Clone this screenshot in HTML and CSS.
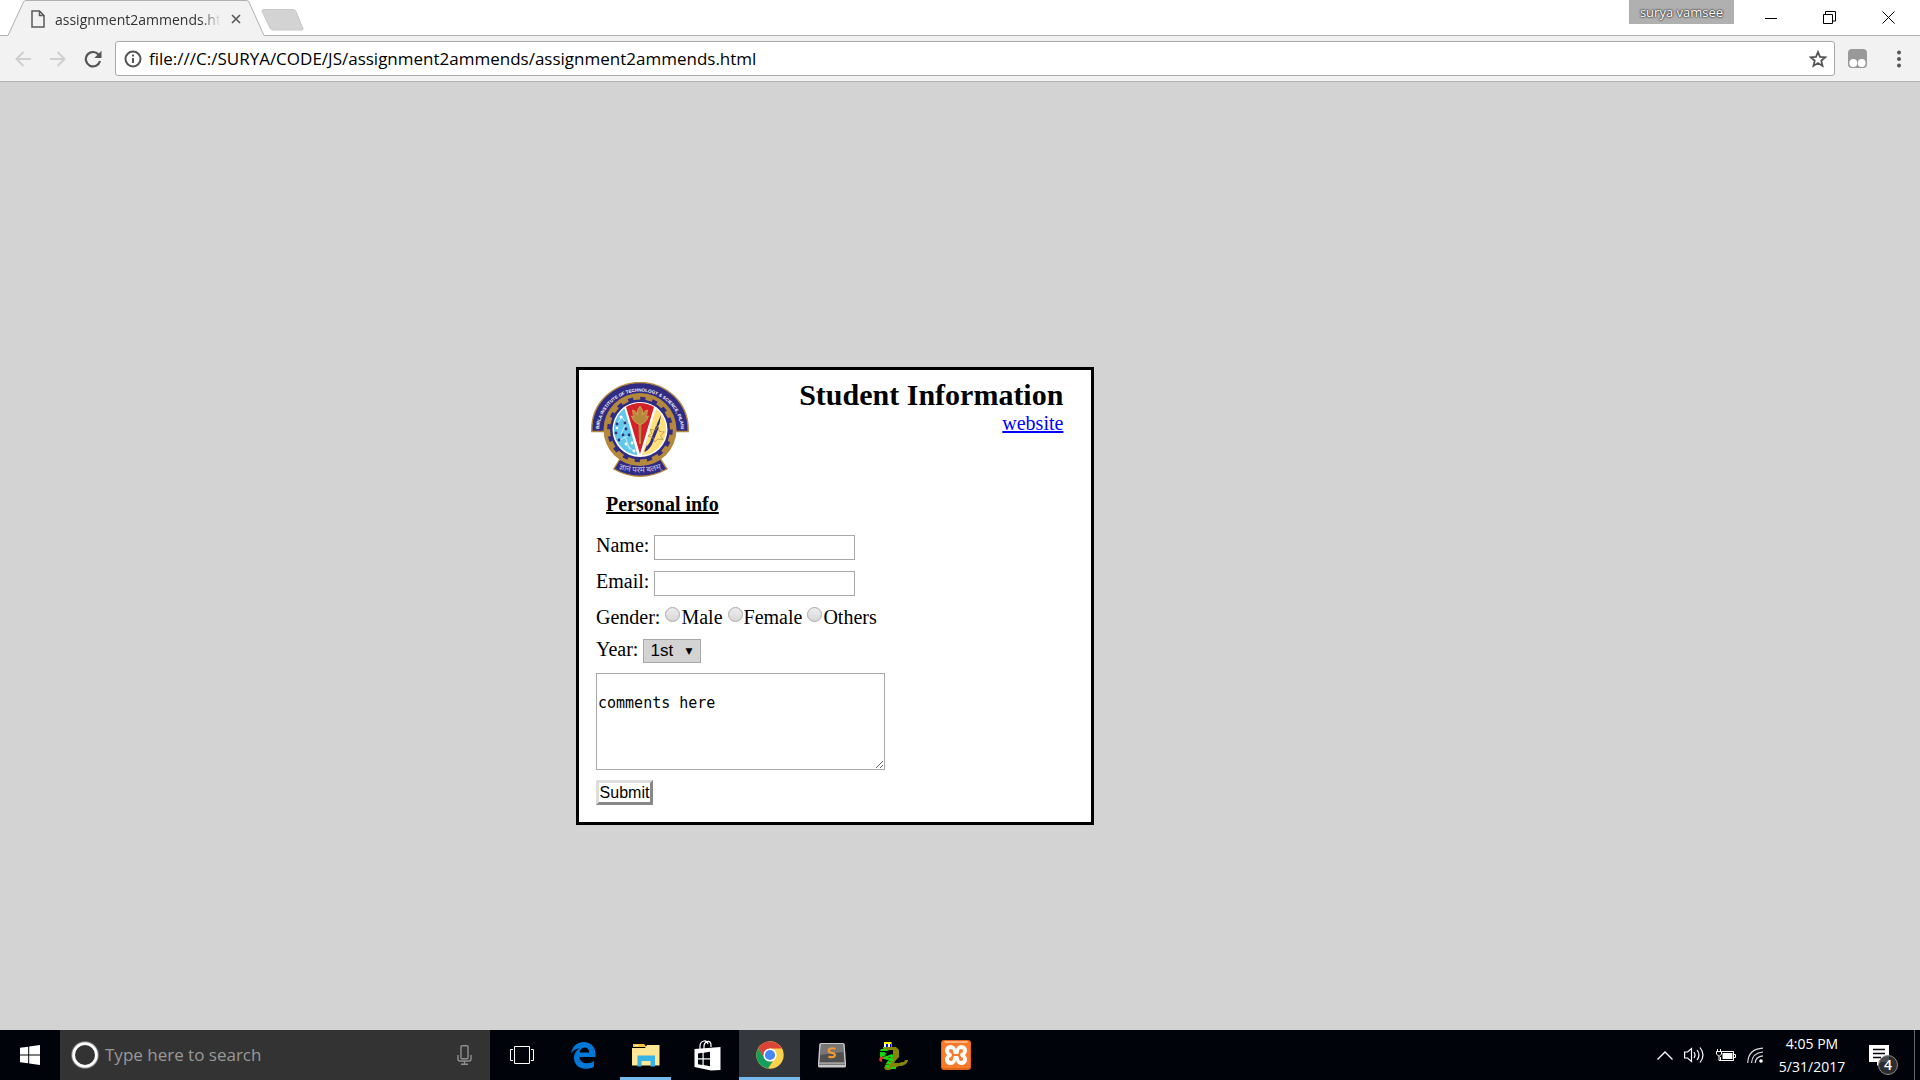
FILE: index.html
```html
<!DOCTYPE html>
<html lang="en">
<head>
<meta charset="utf-8">
<title>assignment2ammends.html</title>
<link rel="stylesheet" href="styles.css">
</head>
<body>
<header class="tabstrip">
  <div class="tab">
    <svg class="tab-shape" viewBox="0 0 260 36" preserveAspectRatio="none" aria-hidden="true"><path d="M0 35.500H2L17.500 2Q18.500.5 20 .5H240Q242 .5 243 2L258 35.500H260V36H0z" fill="#f2f2f2"/><path d="M0 35.500H2L17.500 2Q18.500.5 20 .5H240Q242 .5 243 2L258 35.500H260" fill="none" stroke="#b0b0b0"/></svg>
    <svg class="tab-page" width="14" height="18" viewBox="0 0 14 18" fill="none" stroke="#5a5a5a" stroke-width="1.500"><path d="M1 1h7.500L13 5.500V17H1zM8.500 1v4.500H13"/></svg>
    <span class="tab-title">assignment2ammends.html</span>
    <button class="tab-close" aria-label="Close tab"><svg width="10" height="10" viewBox="0 0 10 10" stroke="#5a5a5a" stroke-width="1.700"><path d="M1 1l8 8M9 1L1 9"/></svg></button>
  </div>
  <button class="new-tab" aria-label="New tab"><svg width="43" height="22" viewBox="0 0 43 22"><path d="M3 .5h29q2 0 3 2l7 17q.5 1.500-1 1.500H12q-2 0-3-2L1 2Q.7.5 3 .5z" fill="#d3d3d3" stroke="#c8c8c8"/></svg></button>
  <button class="profile">surya vamsee</button>
  <div class="window-controls">
    <button aria-label="Minimize"><svg width="12" height="12" viewBox="0 0 12 12" stroke="#000"><path d="M0 7.500h12"/></svg></button>
    <button aria-label="Restore"><svg width="13" height="13" viewBox="0 0 13 13" fill="none" stroke="#000"><path d="M.5 3.500h9v9h-9zM2.500 3V.5h10V10H9.500"/></svg></button>
    <button aria-label="Close"><svg width="13" height="13" viewBox="0 0 13 13" stroke="#000"><path d="M.5.5l12 12M12.500.5l-12 12"/></svg></button>
  </div>
</header>
<nav class="toolbar">
  <button class="nav-button" aria-label="Back"><svg width="16" height="16" viewBox="0 0 16 16" fill="none" stroke="#cfcfcf" stroke-width="2"><path d="M16 8H1.500M8.500 1L1.500 8l7 7"/></svg></button>
  <button class="nav-button" aria-label="Forward"><svg width="16" height="16" viewBox="0 0 16 16" fill="none" stroke="#cfcfcf" stroke-width="2"><path d="M0 8h14.500M7.500 1l7 7-7 7"/></svg></button>
  <button class="nav-button" aria-label="Reload"><svg width="18" height="18" viewBox="0 0 18 18"><path d="M14.500 4.500A7.200 7.200 0 1 0 16 11" fill="none" stroke="#555" stroke-width="2.200"/><path d="M17.500.8V8H10.300z" fill="#555"/></svg></button>
  <div class="omnibox">
    <svg width="18" height="18" viewBox="0 0 18 18" fill="none" stroke="#555" stroke-width="2"><circle cx="9" cy="9" r="7.500"/><path d="M9 8v5M9 4.500v2"/></svg>
    <input class="address" type="text" aria-label="Address" value="file:///C:/SURYA/CODE/JS/assignment2ammends/assignment2ammends.html">
    <button class="star" aria-label="Bookmark"><svg width="18" height="18" viewBox="0 0 18 18"><path d="M9 2l2 4.900 5.300.4-4 3.400 1.200 5.200L9 13.100l-4.500 2.800 1.200-5.200-4-3.400L7 6.900z" fill="none" stroke="#555" stroke-width="1.800"/></svg></button>
  </div>
  <button class="extension" aria-label="Extension"><svg width="19" height="19" viewBox="0 0 19 19"><rect width="19" height="19" rx="4" fill="#999"/><circle cx="5.300" cy="14" r="3.900" fill="#fff"/><circle cx="13.700" cy="14" r="3.900" fill="#fff"/></svg></button>
  <button class="menu" aria-label="Menu"><svg width="4" height="18" viewBox="0 0 4 18" fill="#555"><circle cx="2" cy="2.500" r="2"/><circle cx="2" cy="9" r="2"/><circle cx="2" cy="15.500" r="2"/></svg></button>
</nav>
<main class="page">
  <section class="card">
    <div class="card-head">
      <svg class="crest" width="98" height="95" viewBox="0 0 196 190" role="img" aria-label="Birla Institute of Technology and Science, Pilani">
        <defs><path id="arc-top" d="M16 99A82 80 0 0 1 180 99"/><path id="arc-bottom" d="M50 172Q98 190 146 172"/></defs>
        <g transform="scale(2)">
          <path d="M.8 49.500V47a48.200 46.500 0 0 1 96.400 0v2.500z" fill="#302b83" stroke="#b5893c" stroke-width="1.400"/>
          <path d="M29 77L22.800 87Q49 101.500 76 87L69.500 77z" fill="#302b83" stroke="#b5893c" stroke-width="1.400"/>
          <circle cx="49" cy="47.500" r="36.500" fill="#b5893c"/>
          <circle cx="49" cy="47.500" r="31" fill="none" stroke="#302b83" stroke-width="3.600" stroke-dasharray="5.200 6.974"/>
          <circle cx="49" cy="47.500" r="30" fill="#302b83"/>
          <circle cx="49" cy="47.500" r="27.500" fill="#fff"/>
          <path d="M33.500 26.500A26 26 0 0 0 46.500 73.300z" fill="#62c8ea"/>
          <path d="M35 25Q49 17 63 25L49 72z" fill="#d22129"/>
          <path d="M65 26.800A26 26 0 0 1 51 73.300z" fill="#ffe07a"/>
          <g stroke="#d9f2fb" stroke-width=".8" fill="none"><path d="M26 42l5-7 4 6-5 11 5 5 4 11M29 58l10-5M34 62l9 7"/></g>
          <g fill="#302b83"><circle cx="26" cy="42" r="1.400"/><circle cx="34" cy="41" r="1.400"/><circle cx="35" cy="47" r="1.400"/><circle cx="25" cy="51" r="1.400"/><circle cx="32" cy="53" r="1.400"/><circle cx="28" cy="58" r="1.400"/><circle cx="38" cy="53" r="1.400"/></g>
          <g fill="#fff"><circle cx="30" cy="35" r="1.600"/><circle cx="26" cy="46" r="1.300"/><circle cx="41" cy="61" r="1.400"/><circle cx="43" cy="69" r="1.400"/><circle cx="35" cy="62" r="1.400"/></g>
          <path d="M47.500 40h3l-.5 22h-2z" fill="#b5893c"/>
          <path d="M49 24q4 5 2.500 9 2-5 5-5 0 4-2 7 2-1 3-1-2 7-8.500 8.500Q42.500 41 40.500 34q1 0 3 1-2-3-2-7 3 0 5 5-1.500-4 2.500-9z" fill="#b5893c" stroke="#d8ae58" stroke-width=".7"/>
          <path d="M70 33l-1.500 9-2 3-1-2zM65 44l3 1-6 15q-2 6-8 10l1-4 4-6zM57 66l-4 4 3-7z" fill="#302b83"/>
          <path d="M59 47l5 1.500 3-4 1.500 5 5 .5-4 3.500 2.500 4-5-.5-3.500 3-1.500-4.500-5-1.500 4-2.500z" fill="none" stroke="#a58a45" stroke-width=".7"/>
        </g>
        <text class="crest-title"><textPath href="#arc-top" startOffset="50%" text-anchor="middle">BIRLA INSTITUTE OF TECHNOLOGY &amp; SCIENCE, PILANI</textPath></text>
        <text class="crest-motto"><textPath href="#arc-bottom" startOffset="50%" text-anchor="middle">ज्ञानं परमं बलम्</textPath></text>
      </svg>
      <div class="heading">
        <h1>Student Information</h1>
        <a href="#website">website</a>
      </div>
    </div>
    <h2>Personal info</h2>
    <form class="form">
      <div class="row row-text"><label for="name">Name:</label><input class="field" id="name" type="text"></div>
      <div class="row row-text"><label for="email">Email:</label><input class="field" id="email" type="text"></div>
      <div class="row row-radio"><span>Gender:</span>
        <label class="option"><input type="radio" name="gender">Male</label>
        <label class="option"><input type="radio" name="gender">Female</label>
        <label class="option"><input type="radio" name="gender">Others</label>
      </div>
      <div class="row"><label for="year">Year:</label>
        <span class="select-box"><select id="year"><option>1st</option><option>2nd</option><option>3rd</option><option>4th</option></select></span>
      </div>
      <textarea class="comments" aria-label="Comments">

comments here</textarea>
      <button class="submit" type="button">Submit</button>
    </form>
  </section>
</main>
<footer class="taskbar">
  <button class="start" aria-label="Start"><svg width="20" height="20" viewBox="0 0 20 20" fill="#fff"><path d="M0 2.800L8.200 1.700v7.800H0zM9.200 1.500L20 0v9.500H9.200zM0 10.500h8.200v7.800L0 17.200zM9.200 10.500H20V20L9.200 18.500z"/></svg></button>
  <div class="search">
    <svg width="28" height="28" viewBox="0 0 28 28" fill="none"><circle cx="14" cy="14" r="13" stroke="#888" stroke-width="1.500"/><circle cx="14" cy="14" r="11.400" stroke="#fff" stroke-width="2.800"/></svg>
    <input type="text" placeholder="Type here to search" aria-label="Search">
    <svg width="15" height="20" viewBox="0 0 15 20" fill="none" stroke="#8f8f8f" stroke-width="1.400"><rect x="4" y=".8" width="7" height="13" rx="1"/><path d="M1 10v4q0 2 2 2h9q2 0 2-2v-4M7.500 16v3M4 19.200h7"/></svg>
  </div>
  <div class="apps">
    <button aria-label="Task view"><svg width="24" height="18" viewBox="0 0 24 18" fill="none" stroke="#fff"><path d="M4.500.5h15v17h-15zM3 3.500H.5v11H3M21 3.500h2.500v11H21"/></svg></button>
    <button aria-label="Edge"><svg width="25" height="28" viewBox="0 0 25 28"><path d="M0 12.500C1.500 4.500 7 1 12.500 1 20.500 1 24.500 7 24.500 13v3H8.500c.2 4 3.500 6.300 7.500 6.300 2.800 0 5-.8 7-2v5.400c-2.500 1.500-5.300 2-8.500 2C7.500 27.700 3 23 3 17c0-4.500 2.500-8 6-9.700C5 7.500 2 9.500 0 12.500zM8.600 11.500h9.600c0-3-1.700-5-4.700-5-2.800 0-4.600 2.200-4.900 5z" fill="#0078d7"/></svg></button>
    <button class="running" aria-label="File Explorer"><svg width="28" height="24" viewBox="0 0 28 24"><path d="M1 1h11l2.500 3H1z" fill="#f8c33c"/><path d="M3 2h3v1H3z" fill="#fff"/><path d="M0 5h13l2-3h12.500v20.500H0z" fill="#ffe694"/><path d="M5.500 12.500h17.500v11h-4.500V18h-9v5.500h-4z" fill="#36b4e5"/></svg></button>
    <button aria-label="Store"><svg width="27" height="31" viewBox="0 0 27 31"><path d="M6 10V6q0-4 4-5 3-.5 4 3M10 9V6q0-3 3-4.500 4-1 4 4V7" fill="none" stroke="#fff" stroke-width="1.200"/><path d="M.5 9L26.500 7v23L17 30.500.5 27z" fill="#fff"/><path d="M4 13.500l4.500-.7v5.500H4zM9.700 12.700l6.300-.9v6.500H9.700zM4 19.500h4.500V25L4 24.200zM9.700 19.500H16v6.700L9.700 25z" fill="#00030a"/></svg></button>
    <button class="running active" aria-label="Chrome"><svg width="28" height="28" viewBox="0 0 28 28"><circle cx="14" cy="14" r="13.700" fill="#fdd04e"/><path d="M2.100 7.200A13.700 13.700 0 0 1 25.900 7.600H14L8 17.300z" fill="#db4437"/><path d="M2.100 7.200L8.400 17.200l5.600 3.300 3-.6-5 7.600A13.700 13.700 0 0 1 2.100 7.200z" fill="#159f5c"/><circle cx="14" cy="14" r="6.600" fill="#fff"/><circle cx="14" cy="14" r="5.100" fill="#4687f4"/></svg></button>
    <button aria-label="Sublime Text"><svg width="28" height="26" viewBox="0 0 28 26"><path d="M3 1h22q1.500 0 1.700 1.500L28 21v3q0 1.500-2 1.500H2Q0 25.500 0 24v-3L1.300 2.500Q1.500 1 3 1z" fill="#c9c9c9"/><path d="M3 2h22l1.500 18.500h-25z" fill="#505050"/><path d="M3 2h22l.7 8q-12 1-23.400 3z" fill="#777"/><path d="M1 21.500h26V23H1z" fill="#777"/><path d="M17.500 7q-3.500-1.500-6 0-1.700 2 0 3.300l4.500 1.200q1.800 1.500 0 3.300-2.700.9-5.500-.4" fill="none" stroke="#f59a2f" stroke-width="2.200"/></svg></button>
    <button aria-label="Snake"><svg width="29" height="29" viewBox="0 0 29 29"><path d="M12 1h1v5h4l3 3v7l-3 3-2 3h5l3-1h2l1-2h3v1l-2 3-4 2h-3l-4 2-6 2H7l-2-2 3-6 6-5V9H8l-4-1 1-2z" fill="#858500"/><path d="M4 6h3v1H4zM2 8h5l3 2H1zM1 11h4l3 2-3 1 3 1 5-2 2 2-3 3-3 1-4-1H2l-1-3zM8 21l4-4 3 1-4 5-1 4-4-1zM12 26h5v2h-5z" fill="#12dc10"/><path d="M3 15h4v1H3zM9 16h3v1H9zM7 23h3v1H7zM10 20h2v1h-2z" fill="#4c6b00"/><path d="M5 1h7v2h-1v1H5z" fill="#ff0"/><path d="M5 3h2v3H5zM9 3h2v3H9z" fill="#fff"/><path d="M7 3h2v3H7zM11 3h1v3h-1z" fill="#0000e8"/><path d="M1 16h4v2H3v3H2l-2-2z" fill="#e32"/></svg></button>
    <button aria-label="XAMPP"><svg width="30" height="30" viewBox="0 0 30 30"><rect width="30" height="30" rx="3" fill="#e06419"/><rect x="1" y="1" width="28" height="27" rx="2" fill="#fa7c2a"/><path d="M3 1h24l-1 2H4z" fill="#ffb27c"/><g fill="#fff"><circle cx="9.500" cy="10.500" r="5.500"/><circle cx="20.500" cy="10.500" r="5.500"/><circle cx="9.500" cy="19.500" r="5.500"/><circle cx="20.500" cy="19.500" r="5.500"/><rect x="8" y="10" width="14" height="10"/></g><g fill="#fa7c2a"><circle cx="10" cy="11" r="2"/><circle cx="20" cy="11" r="2"/><circle cx="10" cy="19" r="2"/><circle cx="20" cy="19" r="2"/><path d="M10 11h1.500l1.500 3h4l1.500-3H20v2l-1 2 1 2v2h-1.500L17 16h-4l-1.500 3H10v-2l1-2-1-2z"/></g></svg></button>
  </div>
  <div class="tray">
    <button aria-label="Show hidden icons"><svg width="16" height="9" viewBox="0 0 16 9" fill="none" stroke="#fff" stroke-width="1.300"><path d="M.5 8.500L8 1l7.500 7.500"/></svg></button>
    <button aria-label="Volume"><svg width="21" height="18" viewBox="0 0 21 18" fill="none" stroke="#fff" stroke-width="1.200"><path d="M.6 6h3L7.500 2.500v13L3.600 12h-3zM10 6q2 3 0 6M13 4q4 5 0 10M16 1.500q6 7.500 0 15"/></svg></button>
    <button aria-label="Battery"><svg width="20" height="15" viewBox="0 0 20 15"><path d="M5.500 3.500h12v9h-13V9M18 6.500h1.500v3H18" fill="none" stroke="#fff"/><path d="M6.500 5h10v6h-10z" fill="#fff"/><path d="M1.500 1v2M4.500 1v2M.5 3.500h5V6L3.500 8h-1L.5 6zM3 8v4.500h2" fill="none" stroke="#fff"/></svg></button>
    <button aria-label="Wi-Fi"><svg width="17" height="17" viewBox="0 0 17 17" fill="none" stroke="#ddd" stroke-width="1.200"><path d="M.8 16Q1 2 16 1.200M4.500 16Q5 6 16 5M8.200 16Q8.500 9.500 16 8.800"/><circle cx="14" cy="14" r="1.800" fill="#fff" stroke="none"/></svg></button>
  </div>
  <button class="clock"><span>4:05 PM</span><span>5/31/2017</span></button>
  <button class="notices" aria-label="Notifications"><svg width="20" height="21" viewBox="0 0 20 21"><path d="M0 0h20v17h-8l-4 4v-4H0z" fill="#fff"/><path d="M4 4.500h12M4 8.500h12M4 12.500h8" stroke="#00030a" stroke-width="1.300"/></svg><span class="badge">4</span></button>
  <button class="show-desktop" aria-label="Show desktop"></button>
</footer>
</body>
</html>
```
FILE: styles.css
```css
* { box-sizing: border-box; }
body {
  margin: 0;
  min-height: 100vh;
  display: flex;
  flex-direction: column;
  background: #d3d3d3;
  font-family: "Open Sans", "Noto Sans", sans-serif;
}
button { border: 0; padding: 0; background: none; color: inherit; font: inherit; }
svg { display: block; flex: none; }

/* Tab strip */
.tabstrip {
  display: flex;
  height: 36px;
  padding-left: 6px;
  background: #fff;
  box-shadow: inset 0 -1px #b0b0b0;
}
.tab {
  position: relative;
  display: flex;
  align-items: center;
  width: 260px;
  padding: 2px 19px 0 25px;
}
.tab-shape { position: absolute; inset: 0; width: 100%; height: 100%; }
.tab-page { position: relative; }
.tab-title {
  position: relative;
  flex: 1;
  margin-left: 10px;
  overflow: hidden;
  white-space: nowrap;
  font-size: 14px;
  color: #333;
  -webkit-mask-image: linear-gradient(to left, transparent, #000 20px);
  mask-image: linear-gradient(to left, transparent, #000 20px);
}
.tab-close { position: relative; padding: 0 6px 0 10px; }
.new-tab { align-self: flex-start; padding-top: 9px; margin-left: -5px; }
.profile {
  align-self: flex-start;
  width: 105px;
  height: 24px;
  margin-left: auto;
  background: #b0b0b0;
  color: #fff;
  font-size: 13px;
  text-shadow: 0 0 1px #333, 0 0 2px #333, 0 0 2px #333;
}
.window-controls { display: flex; padding: 0 2px 2px 7px; }
.window-controls button { display: grid; place-items: center; width: 59px; }

/* Toolbar */
.toolbar {
  display: flex;
  align-items: center;
  height: 46px;
  padding: 0 1px 0 5px;
  background: #f2f2f2;
  border-bottom: 1px solid #b3b3b3;
}
.nav-button { display: grid; place-items: center; width: 35px; height: 35px; }
.omnibox {
  flex: 1;
  display: flex;
  align-items: center;
  height: 35px;
  margin-left: 5px;
  padding: 0 7px 0 8px;
  background: #fff;
  border: 1px solid #a9a9a9;
  border-radius: 3px;
}
.address {
  flex: 1;
  min-width: 0;
  margin-left: 7px;
  padding: 0;
  border: 0;
  outline: 0;
  background: none;
  font: 17px/24px "Open Sans", "Noto Sans", sans-serif;
  color: #000;
}
.extension { display: grid; place-items: center; width: 44px; }
.menu { display: grid; place-items: center; width: 40px; }

/* Page */
.page {
  flex: 1;
  padding-top: 285px;
  font: 20px/23px "Liberation Serif", serif;
  color: #000;
}
.card {
  width: 27%;
  min-width: 400px;
  margin-left: 30%;
  background: #fff;
  border: 3px solid #000;
}
.card-head {
  display: flex;
  justify-content: space-between;
  padding: 8px 28px 0 12px;
}
.crest { margin-top: 4px; }
.crest-title { font: bold 9px "Liberation Sans", sans-serif; fill: #fff; }
.crest-motto { font: 16px "Noto Sans", sans-serif; fill: #c9c5e8; }
.heading { text-align: right; }
.heading h1 { margin: 0; font-size: 30px; line-height: 34px; }
.heading a { display: inline-block; color: #00f; }
.card h2 {
  margin: 16px 27px 19px;
  font-size: 20px;
  line-height: 23px;
  text-decoration: underline;
}
.form {
  display: flex;
  flex-direction: column;
  align-items: flex-start;
  gap: 10px;
  padding: 0 17px 17px;
}
.row { display: flex; gap: 5px; line-height: 20px; }
.row-text { height: 26px; }
.row-radio { height: 22px; }
.field {
  width: 201px;
  height: 25px;
  padding: 1px 2px;
  border: 1px solid #a9a9a9;
  font: 16px "Liberation Sans", sans-serif;
}
.option { display: flex; gap: 1px; }
.option input {
  appearance: none;
  width: 15px;
  height: 15px;
  margin: 0;
  border: 1px solid #a9a9a9;
  border-radius: 50%;
  background: linear-gradient(#ececec, #d8d8d8);
}
.option input:checked { background: radial-gradient(#444 35%, #ddd 40%); }
.select-box { position: relative; }
.select-box select {
  appearance: none;
  display: block;
  width: 58px;
  height: 24px;
  padding: 0 6px;
  border: 1px solid #a9a9a9;
  border-radius: 0;
  background: #d3d3d3;
  color: #000;
  font: 17px/20px "Liberation Sans", sans-serif;
}
.select-box::after {
  content: "▼";
  position: absolute;
  top: 2px;
  right: 9px;
  font-family: "DejaVu Sans", sans-serif;
  font-size: 9px;
  pointer-events: none;
}
.comments {
  width: 289px;
  height: 97px;
  padding: 2px 1px;
  border: 1px solid #a9a9a9;
  font: 15px/18px "DejaVu Sans Mono", monospace;
  color: #000;
}
.submit {
  width: 57px;
  height: 25px;
  border: 3px solid;
  border-color: #ddd #888 #888 #ddd;
  background: #fff;
  font: 16px/16px "Liberation Sans", sans-serif;
  color: #000;
}

/* Taskbar */
.taskbar {
  display: flex;
  height: 50px;
  background: #00030a;
  color: #fff;
}
.start { display: grid; place-items: center; width: 60px; }
.search {
  display: flex;
  align-items: center;
  width: 430px;
  padding: 0 18px 0 11px;
  background: #333;
}
.search input {
  flex: 1;
  min-width: 0;
  margin-left: 6px;
  padding: 0;
  border: 0;
  outline: 0;
  background: none;
  color: #fff;
  font: 17px/24px "Open Sans", "Noto Sans", sans-serif;
}
.search input::placeholder { color: #999; }
.apps { display: flex; gap: 1px; margin-left: 1px; }
.apps button { display: grid; place-items: center; width: 61px; }
.apps .running {
  background: linear-gradient(#76b9ed, #76b9ed) center bottom / 51px 3px no-repeat;
}
.apps .active { background-color: #34373c; background-size: 100% 3px; }
.tray { display: flex; align-items: center; gap: 11px; margin-left: auto; }
.clock {
  display: flex;
  flex-direction: column;
  justify-content: center;
  width: 96px;
  font-size: 14px;
  line-height: 23px;
}
.notices { position: relative; width: 38px; padding-left: 9px; }
.badge {
  position: absolute;
  left: 18px;
  bottom: 5px;
  width: 20px;
  height: 20px;
  border: 1px solid #888;
  border-radius: 50%;
  background: #333333e0;
  font-size: 14px;
  font-weight: 600;
  line-height: 18px;
}
.show-desktop { width: 6px; margin-left: 16px; border-left: 1px solid #666; }
```
